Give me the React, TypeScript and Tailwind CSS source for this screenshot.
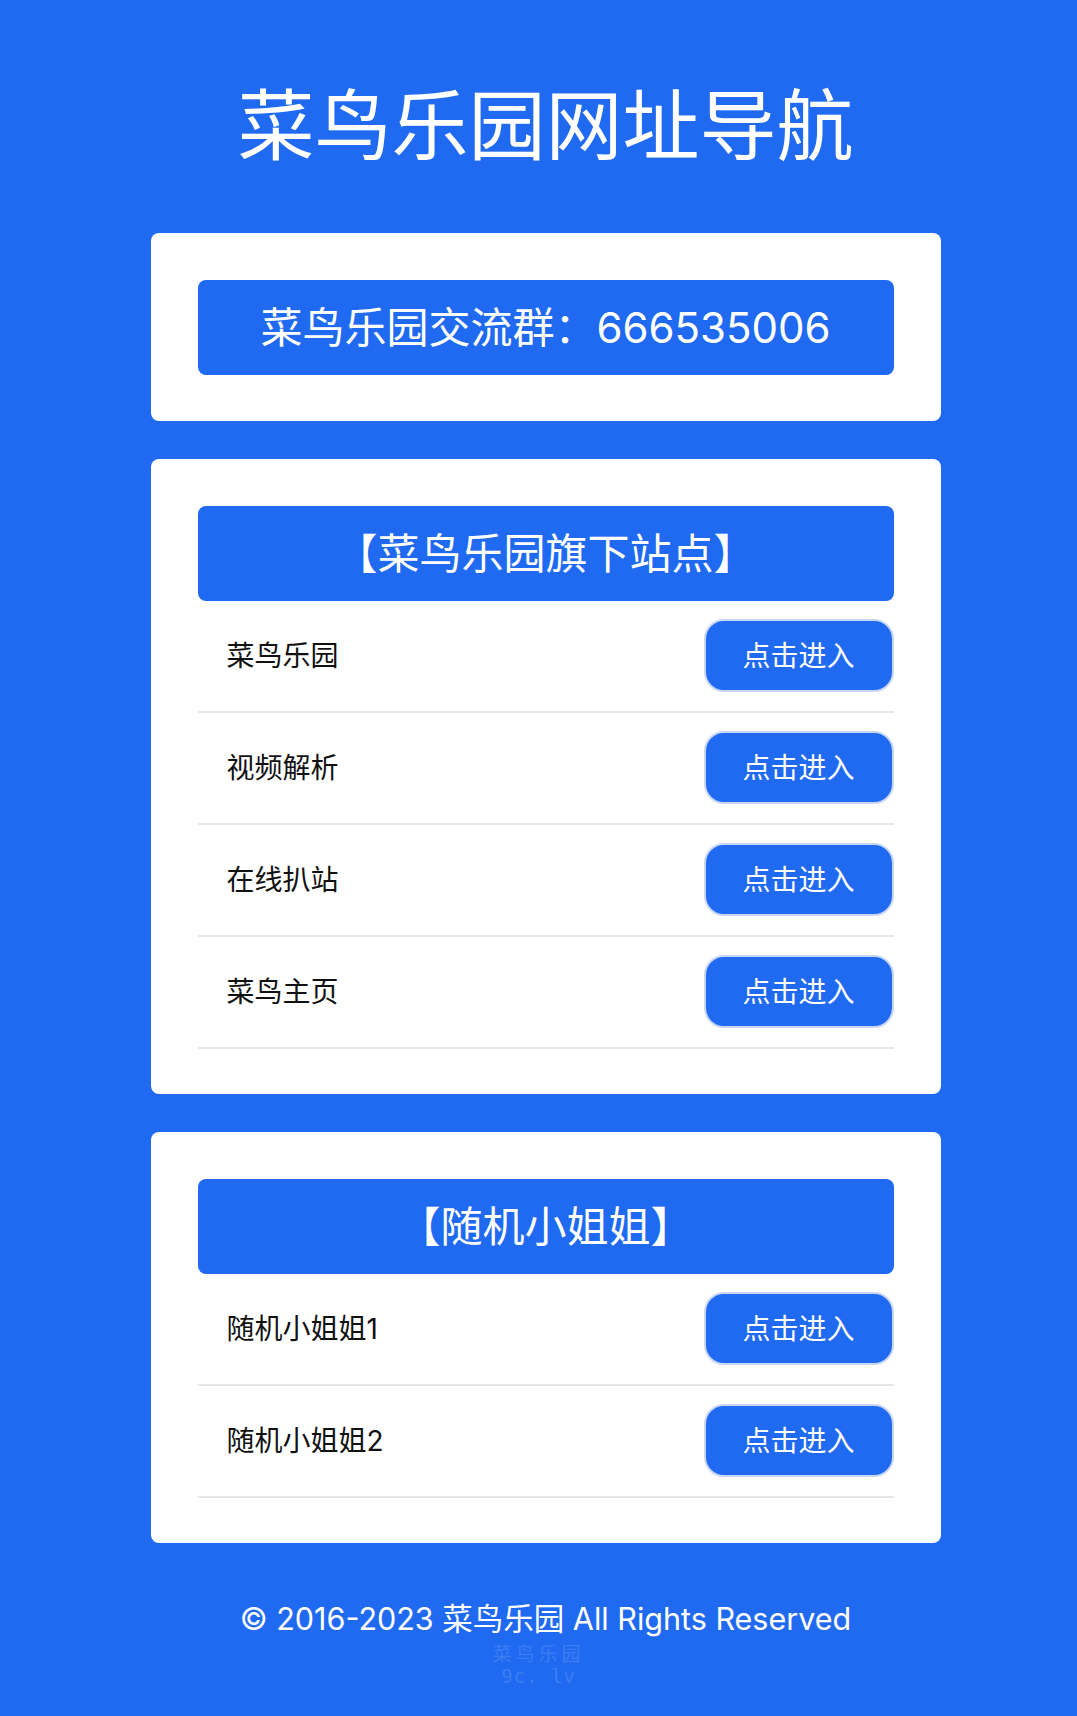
import React from "react";

// 站点数据
const groups = [
  {
    title: "【菜鸟乐园旗下站点】",
    items: ["菜鸟乐园", "视频解析", "在线扒站", "菜鸟主页"],
  },
  {
    title: "【随机小姐姐】",
    items: ["随机小姐姐1", "随机小姐姐2"],
  },
];

const sans = "font-['Inter','Noto_Sans_CJK_SC',sans-serif]";

function Row({ name }: { name: string }) {
  return (
    <div className="flex items-center justify-between pl-[29px] pt-[18px] pb-[19px] border-b-2 border-[#e6e6e6]">
      <span className="text-[28px] leading-none text-[#111]">{name}</span>
      <button className="w-[190px] h-[73px] rounded-[20px] bg-[#1f6af1] border-2 border-[#c9d6f3] text-white text-[28px] leading-none">
        点击进入
      </button>
    </div>
  );
}

export default function App() {
  return (
    <div className={`min-h-[1716px] bg-[#1f6af1] ${sans}`}>
      {/* 主体内容 */}
      <div className="pl-[14px] pt-[88px] flex flex-col items-center">
        <h1 className="text-[77px] leading-none text-white font-normal">菜鸟乐园网址导航</h1>

        <div className="w-[790px] mt-[68px] flex flex-col gap-[38px]">
          {/* 交流群 */}
          <div className="bg-white rounded-lg p-[47px] pb-[46px]">
            <div className="h-[95px] rounded-lg bg-[#1f6af1] flex items-center justify-center text-white text-[42px] leading-none">
              菜鸟乐园交流群：666535006
            </div>
          </div>

          {groups.map((g) => (
            <div key={g.title} className="bg-white rounded-lg px-[47px] pt-[47px] pb-[45px]">
              <div className="h-[95px] rounded-lg bg-[#1f6af1] flex items-center justify-center text-white text-[42px] leading-none">
                {g.title}
              </div>
              {g.items.map((it) => (
                <Row key={it} name={it} />
              ))}
            </div>
          ))}
        </div>

        <p className="mt-[61px] text-white text-[30.5px] leading-none">
          © 2016-2023 菜鸟乐园 All Rights Reserved
        </p>
      </div>

      {/* 水印 */}
      <div className="flex flex-col items-center mt-[8px] text-white/15 font-['DejaVu_Sans_Mono','Noto_Sans_CJK_SC',monospace] text-[19px] leading-[22px]">
        <span className="tracking-[4px]">菜鸟乐园</span>
        <span className="tracking-[1px]">9c. lv</span>
      </div>
    </div>
  );
}
